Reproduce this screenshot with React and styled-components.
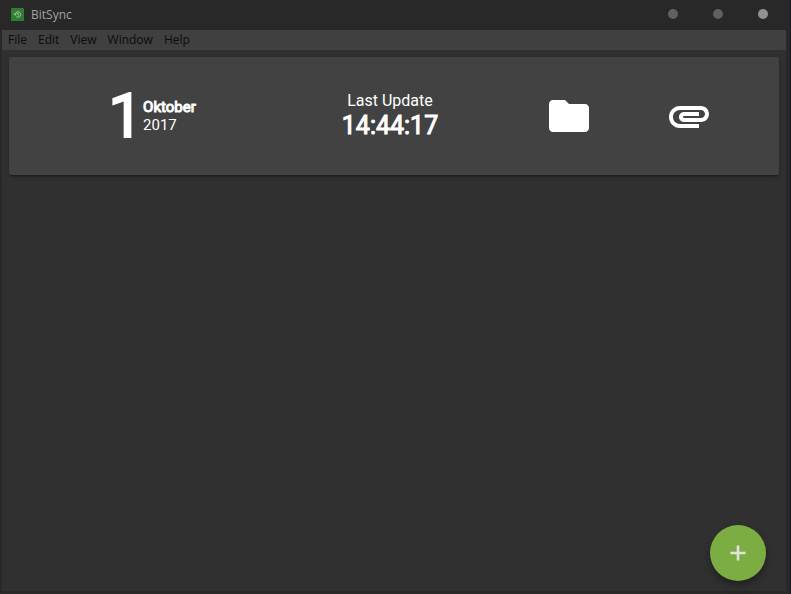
import React from "react";
import styled, { createGlobalStyle } from "styled-components";

const GlobalStyle = createGlobalStyle`
  *, *::before, *::after { box-sizing: border-box; }
  body { margin: 0; background: #171a21; }
`;

const Window = styled.div`
  display: flex;
  flex-direction: column;
  min-height: 100vh;
  margin-right: 1px;
  padding: 0 4px 3px 2px;
  background: #282828;
  font-family: Roboto, sans-serif;
  color: #ffffff;
`;

const TitleBar = styled.header`
  display: flex;
  align-items: center;
  height: 30px;
  padding: 0 18px 2px 9px;
`;

const Title = styled.h1`
  flex: 1;
  margin: 0 0 0 7px;
  padding-top: 2px;
  font: 400 12px/16px "Open Sans", sans-serif;
  color: #a3a3a3;
`;

const WindowControls = styled.div`
  display: flex;
  gap: 35px;
`;

const WindowButton = styled.button`
  width: 10px;
  height: 10px;
  padding: 0;
  border: 0;
  border-radius: 50%;
  background: ${({ $bright }) => ($bright ? "#929292" : "#606060")};
`;

const MenuBar = styled.nav`
  display: flex;
  align-items: center;
  gap: 11px;
  height: 20px;
  padding-left: 6px;
  background: #404040;
`;

const MenuButton = styled.button`
  padding: 0;
  border: 0;
  background: none;
  font: 400 12px/20px "Open Sans", sans-serif;
  color: #0c0c0c;
`;

const Content = styled.main`
  display: flex;
  flex: 1;
  flex-direction: column;
  justify-content: space-between;
  padding: 7px 7px 10px;
  background: #303030;
`;

const Card = styled.section`
  display: grid;
  grid-template-columns: 2fr 2fr 1fr 1fr;
  align-items: center;
  justify-items: center;
  padding: 34px 30px 34px 20px;
  border-radius: 2px;
  background: #424242;
  box-shadow: 0 2px 2px rgba(0, 0, 0, 0.14), 0 1px 5px rgba(0, 0, 0, 0.12),
    0 3px 1px -2px rgba(0, 0, 0, 0.2);
`;

const DateBlock = styled.div`
  display: flex;
  align-items: center;
  padding-left: 6px;
`;

const Day = styled.span`
  font-size: 62px;
  line-height: 50px;
  -webkit-text-stroke: 2px currentColor;
`;

const MonthYear = styled.div`
  display: flex;
  flex-direction: column;
  font-size: 15px;
  line-height: 18px;
`;

const Month = styled.strong`
  font-weight: 400;
  -webkit-text-stroke: 1px currentColor;
`;

const UpdateBlock = styled.div`
  display: flex;
  flex-direction: column;
  align-items: center;
  padding-left: 2px;
  font-size: 16px;
  line-height: 20px;
`;

const Time = styled.time`
  font-size: 25px;
  line-height: 30px;
  -webkit-text-stroke: 1px currentColor;
`;

const IconButton = styled.button`
  display: flex;
  padding: 0;
  border: 0;
  background: none;
  color: inherit;
`;

const AddButton = styled.button`
  display: flex;
  align-items: center;
  justify-content: center;
  align-self: flex-end;
  width: 56px;
  height: 56px;
  margin-right: 13px;
  padding: 0;
  border: 0;
  border-radius: 50%;
  background: #7cad43;
  color: #e0e4dc;
  box-shadow: 0 3px 5px rgba(0, 0, 0, 0.2), 0 5px 10px rgba(0, 0, 0, 0.16);
`;

const AppIcon = () => (
  <svg width="13" height="13" viewBox="0 0 13 13" aria-hidden="true">
    <rect width="13" height="13" rx="1" fill="#2e7d32" />
    <path
      d="M4.2 6.3a2.7 2.7 0 1 1 1.2 2.4M2.6 5.8 4.1 7.2l1.4-1.4M6.8 5v1.6l1.2.7"
      fill="none"
      stroke="#b5d0b6"
      strokeWidth="1"
    />
  </svg>
);

const Icon = ({ size, path }) => (
  <svg width={size} height={size} viewBox="0 0 24 24" fill="currentColor" aria-hidden="true">
    <path d={path} />
  </svg>
);

const FOLDER = "M10 4H4c-1.1 0-2 .9-2 2v12c0 1.1.9 2 2 2h16c1.1 0 2-.9 2-2V8c0-1.1-.9-2-2-2h-8z";
const ATTACHMENT =
  "M2 12.5C2 9.46 4.46 7 7.5 7H18c2.21 0 4 1.79 4 4s-1.79 4-4 4H9.5C8.12 15 7 13.88 7 12.5S8.12 10 9.5 10H17v2H9.41c-.55 0-.55 1 0 1H18c1.1 0 2-.9 2-2s-.9-2-2-2H7.5C5.57 9 4 10.57 4 12.5S5.57 16 7.5 16H17v2H7.5C4.46 18 2 15.54 2 12.5z";
const PLUS = "M19 13.2h-5.8V19h-2.4v-5.8H5v-2.4h5.8V5h2.4v5.8H19z";

const MENUS = ["File", "Edit", "View", "Window", "Help"];

export default function App() {
  return (
    <>
      <GlobalStyle />
      <Window>
        <TitleBar>
          <AppIcon />
          <Title>BitSync</Title>
          <WindowControls>
            <WindowButton aria-label="Minimize" />
            <WindowButton aria-label="Maximize" />
            <WindowButton aria-label="Close" $bright />
          </WindowControls>
        </TitleBar>
        <MenuBar>
          {MENUS.map((name) => (
            <MenuButton key={name}>{name}</MenuButton>
          ))}
        </MenuBar>
        <Content>
          <Card>
            <DateBlock>
              <Day>1</Day>
              <MonthYear>
                <Month>Oktober</Month>
                <span>2017</span>
              </MonthYear>
            </DateBlock>
            <UpdateBlock>
              <span>Last Update</span>
              <Time>14:44:17</Time>
            </UpdateBlock>
            <IconButton aria-label="Open folder">
              <Icon size={48} path={FOLDER} />
            </IconButton>
            <IconButton aria-label="Attach">
              <Icon size={48} path={ATTACHMENT} />
            </IconButton>
          </Card>
          <AddButton aria-label="Add">
            <Icon size={26} path={PLUS} />
          </AddButton>
        </Content>
      </Window>
    </>
  );
}
